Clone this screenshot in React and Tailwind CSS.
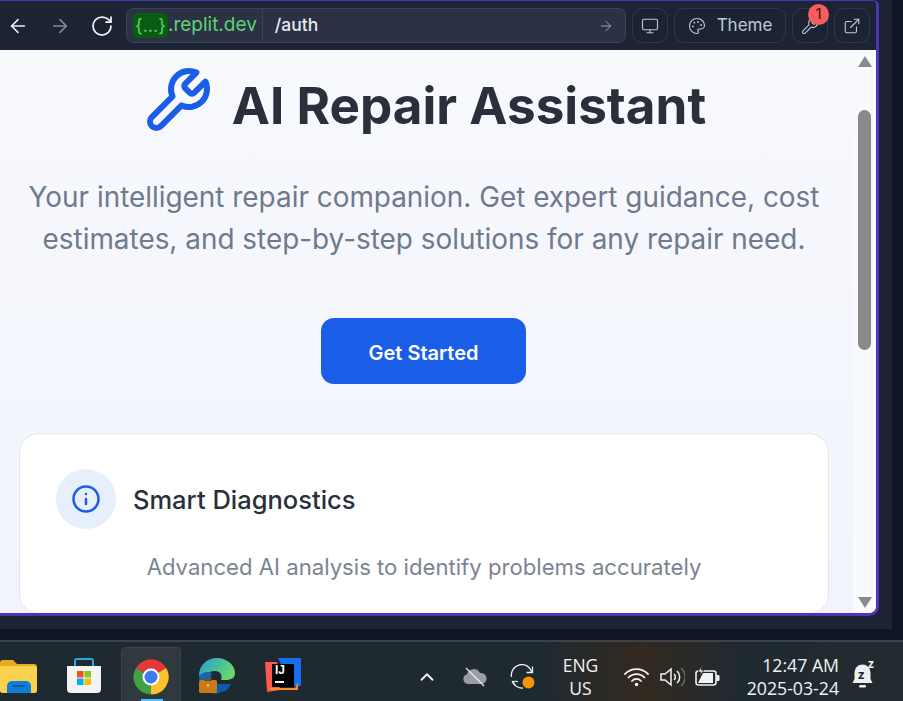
import { ArrowLeft, ArrowRight, RotateCw, Monitor, Palette, Wrench, ExternalLink, Info, ChevronUp } from 'lucide-react';

const ToolButton = ({ children, className = '' }) => (
  <div className={`relative flex h-[35px] items-center justify-center rounded-[10px] border border-[#2f3850] text-[#c2c8d4] ${className}`}>
    {children}
  </div>
);

const Toolbar = () => (
  <div className="flex h-[49px] shrink-0 items-center bg-[#1c2333] font-['Inter',sans-serif]">
    <ArrowLeft size={22} strokeWidth={1.75} className="ml-[7px] text-[#eef0f4]" />
    <ArrowRight size={22} strokeWidth={1.75} className="ml-[20px] text-[#868b96]" />
    <RotateCw size={24} strokeWidth={1.75} className="ml-[19px] text-[#f0f1f4]" />
    <div className="ml-[12px] flex h-[35px] w-[500px] items-center rounded-[7px] border border-[#3a4357] bg-[#2b3245]">
      <div className="flex h-full items-center border-r border-[#3a4357] pl-[6px] pr-[5px]">
        <span className="rounded-[5px] bg-[#0b5c13] px-[2px] py-[1px] text-[18px] leading-[23px] text-[#5dd36f]">{'{...}'}</span>
        <span className="text-[19px] text-[#5dd36f]">.replit.dev</span>
      </div>
      <span className="ml-[12px] text-[17.500px] font-medium text-[#e8eaef]">/auth</span>
      <ArrowRight size={16} strokeWidth={1.5} className="ml-auto mr-[11px] text-[#9da3b0]" />
    </div>
    <ToolButton className="ml-[6px] w-[36px]">
      <Monitor size={18} strokeWidth={1.5} />
    </ToolButton>
    <ToolButton className="ml-[6px] w-[112px] gap-[11px]">
      <Palette size={18} strokeWidth={1.5} />
      <span className="text-[17px] text-[#c2c8d4]">Theme</span>
    </ToolButton>
    <ToolButton className="ml-[6px] w-[36px]">
      <Wrench size={18} strokeWidth={1.5} />
      <span className="absolute right-[-2px] top-[-5px] flex h-[21px] w-[21px] items-center justify-center rounded-full bg-[#f85c5c] text-[15px] text-[#3a1418]">1</span>
    </ToolButton>
    <ToolButton className="ml-[6px] w-[36px]">
      <ExternalLink size={18} strokeWidth={1.5} />
    </ToolButton>
  </div>
);

const Scrollbar = () => (
  <div className="flex w-[23px] shrink-0 flex-col items-center bg-[#f9fafe]">
    <div className="mt-[6px] h-0 w-0 border-x-[7px] border-b-[11px] border-x-transparent border-b-[#8a8a8a]" />
    <div className="mt-[43px] h-[240px] w-[13px] rounded-full bg-[#8a8a8a]" />
    <div className="mt-auto mb-[5px] h-0 w-0 border-x-[7px] border-t-[11px] border-x-transparent border-t-[#8a8a8a]" />
  </div>
);

const Page = () => (
  <div className="flex min-h-0 flex-1 bg-gradient-to-b from-[#f8f9fd] to-[#f0f4fc]">
    <div className="min-w-0 flex-1 overflow-hidden font-['Inter',sans-serif]">
      <div className="mt-[18px] flex h-[75px] items-center justify-center gap-[19px] pr-[6px]">
        <svg width="72" height="72" viewBox="0 0 24 24" fill="none" stroke="#1a5ee8" strokeWidth="2" strokeLinecap="round" strokeLinejoin="round" className="mb-[10px]">
          <path d="M14.7 6.3a1 1 0 0 0 0 1.4l1.6 1.6a1 1 0 0 0 1.4 0l3.77-3.77a6 6 0 0 1-7.94 7.94l-6.91 6.91a2.12 2.12 0 0 1-3-3l6.91-6.91a6 6 0 0 1 7.94-7.94l-3.76 3.76z" />
        </svg>
        <h1 className="text-[51.200px] font-bold leading-[75px] text-[#2a2f3c]">AI Repair Assistant</h1>
      </div>
      <p className="mt-[33px] pr-[5px] text-center text-[27.900px] leading-[42px] text-[#6f7a8c]">
        Your intelligent repair companion. Get expert guidance, cost
        <br />
        estimates, and step-by-step solutions for any repair need.
      </p>
      <div className="mt-[58px] flex justify-center pr-[6px]">
        <button className="h-[66px] w-[205px] rounded-[13px] bg-[#1a5ee8] pt-[3px] text-[20px] font-semibold text-white">Get Started</button>
      </div>
      <div className="mx-[19px] mt-[49px] h-[181px] w-[810px] rounded-[20px] border border-[#e4e7ec] bg-white px-[36px] pt-[35px]">
        <div className="flex items-center gap-[17px]">
          <div className="flex h-[60px] w-[60px] items-center justify-center rounded-full bg-[#e8effc]">
            <Info size={30} strokeWidth={2} className="text-[#1a5ee8]" />
          </div>
          <span className="pt-[3px] text-[25.500px] font-medium text-[#2a2f3c]">Smart Diagnostics</span>
        </div>
        <p className="mt-[22px] text-center text-[22.150px] text-[#7b8494]">Advanced AI analysis to identify problems accurately</p>
      </div>
    </div>
    <Scrollbar />
  </div>
);

const FolderIcon = () => (
  <svg width="37" height="33" viewBox="0 0 37 33">
    <path d="M0 3a3 3 0 0 1 3-3h10l4 4h17a3 3 0 0 1 3 3v23a3 3 0 0 1-3 3H3a3 3 0 0 1-3-3z" fill="#e8a91f" />
    <path d="M0 6h34a3 3 0 0 1 3 3v21a3 3 0 0 1-3 3H3a3 3 0 0 1-3-3z" fill="#fbd04f" />
    <path d="M7 26a5 5 0 0 1 5-5h14a5 5 0 0 1 5 5v7H7z" fill="#0f7fd6" />
    <rect x="12" y="25" width="14" height="2" rx="1" fill="#0a5aa0" />
  </svg>
);

const StoreIcon = () => (
  <svg width="36" height="36" viewBox="0 0 36 36">
    <path d="M9 8V3a2 2 0 0 1 2-2h14a2 2 0 0 1 2 2v5" fill="none" stroke="#2aa6e0" strokeWidth="2" />
    <path d="M1 8h34v23a4 4 0 0 1-4 4H5a4 4 0 0 1-4-4z" fill="#f4f4f4" />
    <rect x="11" y="13" width="6.500" height="6.500" fill="#f1511b" />
    <rect x="18.500" y="13" width="6.500" height="6.500" fill="#80cc28" />
    <rect x="11" y="20.500" width="6.500" height="6.500" fill="#00adef" />
    <rect x="18.500" y="20.500" width="6.500" height="6.500" fill="#fbbc09" />
  </svg>
);

const ChromeIcon = () => (
  <svg width="36" height="36" viewBox="0 0 36 36">
    <path d="M18 18 3 9a17.500 17.500 0 0 1 30.200 0z" fill="#e53935" />
    <path d="M18 18 33.200 9A17.500 17.500 0 0 1 18 35.500z" fill="#fbc02d" />
    <path d="M18 18v17.500A17.500 17.500 0 0 1 3 9z" fill="#43a047" />
    <circle cx="18" cy="18" r="8.500" fill="#fff" />
    <circle cx="18" cy="18" r="6.500" fill="#3b7ded" />
  </svg>
);

const EdgeIcon = () => (
  <svg width="36" height="36" viewBox="0 0 36 36">
    <defs>
      <linearGradient id="edge" x1="0" y1="0" x2="1" y2="0.500">
        <stop offset="0" stopColor="#1d9fd8" />
        <stop offset="1" stopColor="#6ad66a" />
      </linearGradient>
    </defs>
    <path d="M0 18C0 7 8 0 18 0c10 0 18 7 18 15 0 5-4 7-9 7h-5c2-5-1-9-6-9-7 0-11 5-16 5z" fill="url(#edge)" />
    <path d="M0 18c3-4 9-5 13-3-3 5-2 15 8 20-11 3-21-6-21-17z" fill="#1565b0" />
    <path d="M18 26h14c-2 5-7 9-14 9z" fill="#0f5aa8" />
    <rect x="0" y="22" width="18" height="13" rx="1.500" fill="#c8791a" />
    <rect x="6" y="19.500" width="6" height="3" fill="none" stroke="#7a4a10" strokeWidth="1" />
    <rect x="8" y="26.500" width="2" height="2" fill="#f5d070" />
  </svg>
);

const IdeaIcon = () => (
  <div className="relative h-[36px] w-[36px]">
    <svg width="36" height="36" viewBox="0 0 36 36" className="absolute inset-0">
      <path d="M0 4h12l3 28-13 2z" fill="#fc5a4f" />
      <path d="M13 0h23v28h-10z" fill="#1a6cf0" />
      <path d="M4 30h26l3-6v8H6z" fill="#fb8c2a" />
    </svg>
    <div className="absolute left-[7px] top-[6px] h-[23px] w-[22px] bg-black px-[3px] font-['Liberation_Sans',sans-serif] text-[12px] font-bold leading-[13px] text-white">
      IJ
      <div className="mt-[4px] h-[2px] w-[9px] bg-white" />
    </div>
  </div>
);

const CloudOffIcon = () => (
  <svg width="26" height="22" viewBox="0 0 26 22">
    <path d="M6 18a5 5 0 0 1-1-9.800A7 7 0 0 1 18 7a5.500 5.500 0 0 1 2 11z" fill="#9a9ea2" />
    <path d="M4 2 22 20" stroke="#e9ebec" strokeWidth="1.300" />
  </svg>
);

const SyncIcon = () => (
  <svg width="26" height="26" viewBox="0 0 26 26" fill="none" stroke="#eef0f1" strokeWidth="1.300">
    <path d="M1.500 13A10.500 10.500 0 0 1 22 8.500" />
    <path d="M22.500 2.500v6h-6" />
    <path d="M2 17.500h6" />
    <path d="M2.500 17.500A10.500 10.500 0 0 0 13 24" />
    <path d="M2 17.500 5 21" />
    <circle cx="18.500" cy="18.500" r="6" fill="#f59300" stroke="none" />
  </svg>
);

const WifiIcon = () => (
  <svg width="25" height="20" viewBox="0 0 25 20" fill="none" stroke="#f2f3f4" strokeWidth="1.800" strokeLinecap="round">
    <path d="M1 7a16 16 0 0 1 23 0" />
    <path d="M4.500 10.500a11 11 0 0 1 16 0" />
    <path d="M8 14a6 6 0 0 1 9 0" />
    <circle cx="12.500" cy="17.500" r="1.800" fill="#f2f3f4" stroke="none" />
  </svg>
);

const VolumeIcon = () => (
  <svg width="25" height="22" viewBox="0 0 25 22" fill="none" stroke="#f2f3f4" strokeWidth="1.500">
    <path d="M1 8h4l6-5v16l-6-5H1z" />
    <path d="M14 8a4 4 0 0 1 0 6" />
    <path d="M17 5a8 8 0 0 1 0 12" />
    <path d="M21 2a12 12 0 0 1 0 18" stroke="#6b6f72" />
  </svg>
);

const BatteryIcon = () => (
  <svg width="25" height="22" viewBox="0 0 25 22">
    <rect x="1" y="6" width="20" height="14" rx="2.500" fill="none" stroke="#f2f3f4" strokeWidth="1.600" />
    <rect x="21.500" y="10" width="3" height="6" rx="1" fill="#f2f3f4" />
    <path d="M3 18 8 8h10v10z" fill="#f2f3f4" />
    <path d="M7 0 3 7h3l-2 5 5-7H6z" fill="#f2f3f4" stroke="#22292e" strokeWidth="0.800" />
  </svg>
);

const BellIcon = () => (
  <div className="relative h-[26px] w-[22px]">
    <svg width="22" height="26" viewBox="0 0 22 26" className="absolute inset-0">
      <path d="M10.500 1.500A8 8 0 0 0 2.500 9.500V16L0.500 20h20l-2-4V9.500a8 8 0 0 0-8-8z" fill="#eef0f1" />
      <rect x="7" y="22" width="7" height="2.500" rx="1.200" fill="#eef0f1" />
    </svg>
    <span className="absolute left-[6px] top-[5px] text-[13px] font-bold leading-[13px] text-[#22292e]">z</span>
    <span className="absolute left-[16px] top-[-5px] text-[12px] font-bold leading-[12px] text-[#eef0f1]">z</span>
  </div>
);

const Taskbar = () => (
  <div className="flex h-[61px] shrink-0 items-center border-t-2 border-[#3c4245] bg-[linear-gradient(90deg,#1f2a30_0%,#1f2a30_60%,#33291f_71%,#1f2a30_82%,#212b30_100%)] font-['Open_Sans',sans-serif] text-[#f2f3f4]">
    <div className="mt-[9px] ml-0"><FolderIcon /></div>
    <div className="ml-[29px] mt-[9px]"><StoreIcon /></div>
    <div className="relative ml-[19px] flex h-[54px] w-[60px] items-center justify-center self-end rounded-t-[5px] border border-b-0 border-[#3c4448] bg-[#2f393e] pt-[5px]">
      <ChromeIcon />
      <div className="absolute bottom-0 left-[19px] h-[2px] w-[22px] bg-[#4cc2ff]" />
    </div>
    <div className="ml-[18px] mt-[9px]"><EdgeIcon /></div>
    <div className="ml-[30px] mt-[9px]"><IdeaIcon /></div>
    <ChevronUp size={22} strokeWidth={2} className="ml-[115px] mt-[10px]" />
    <div className="ml-[24px] mt-[11px]"><CloudOffIcon /></div>
    <div className="ml-[22px] mt-[11px]"><SyncIcon /></div>
    <div className="ml-[22px] mt-[11px] w-[45px] text-center text-[17.500px] leading-[23px]">
      ENG
      <br />
      US
    </div>
    <div className="ml-[21px] mt-[11px]"><WifiIcon /></div>
    <div className="ml-[11px] mt-[11px]"><VolumeIcon /></div>
    <div className="ml-[10px] mt-[9px]"><BatteryIcon /></div>
    <div className="ml-[10px] mt-[11px] w-[109px] text-right text-[17.700px] leading-[23px]">
      12:47 AM
      <br />
      2025-03-24
    </div>
    <div className="ml-[13px] mt-[9px]"><BellIcon /></div>
  </div>
);

export default function App() {
  return (
    <div className="flex h-[701px] w-[903px] flex-col overflow-hidden bg-[#0f1525]">
      <div className="flex min-h-0 flex-1 flex-col">
        <div className="h-[629px] w-[892px] bg-[#1c2333]">
          <div className="flex h-[616px] w-[879px] flex-col overflow-hidden rounded-br-[10px] rounded-tr-[6px] border-t border-b-[3px] border-r-[3px] border-[#4c35b8] bg-[#1c2333]">
            <Toolbar />
            <Page />
          </div>
        </div>
      </div>
      <Taskbar />
    </div>
  );
}
